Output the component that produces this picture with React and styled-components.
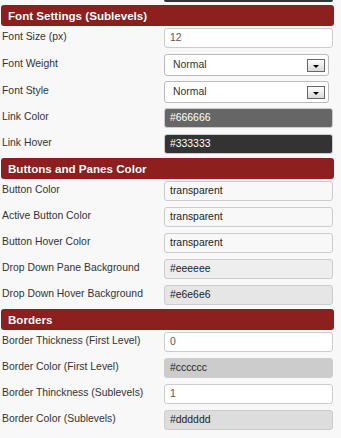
import React from "react";
import styled, { createGlobalStyle } from "styled-components";

const GlobalStyle = createGlobalStyle`
  body {
    margin: 0;
    background: #f8f8f8;
    font-family: "Liberation Sans", Arial, sans-serif;
  }
`;

const sections = [
  {
    title: "Font Settings (Sublevels)",
    rows: [
      { label: "Font Size (px)", value: "12" },
      { label: "Font Weight", value: "Normal", select: true },
      { label: "Font Style", value: "Normal", select: true },
      { label: "Link Color", value: "#666666", bg: "#666666", color: "#ffffff" },
      { label: "Link Hover", value: "#333333", bg: "#333333", color: "#ffffff" },
    ],
  },
  {
    title: "Buttons and Panes Color",
    rows: [
      { label: "Button Color", value: "transparent", bg: "transparent", color: "#222" },
      { label: "Active Button Color", value: "transparent", bg: "transparent", color: "#222" },
      { label: "Button Hover Color", value: "transparent", bg: "transparent", color: "#222" },
      { label: "Drop Down Pane Background", value: "#eeeeee", bg: "#eeeeee", color: "#222" },
      { label: "Drop Down Hover Background", value: "#e6e6e6", bg: "#e6e6e6", color: "#222" },
    ],
  },
  {
    title: "Borders",
    rows: [
      { label: "Border Thickness (First Level)", value: "0" },
      { label: "Border Color (First Level)", value: "#cccccc", bg: "#cccccc", color: "#222" },
      { label: "Border Thinckness (Sublevels)", value: "1" },
      { label: "Border Color (Sublevels)", value: "#dddddd", bg: "#dddddd", color: "#222" },
    ],
  },
];

function App() {
  return (
    <Panel>
      <GlobalStyle />
      <CutInput />
      {sections.map((section) => (
        <Section key={section.title}>
          <Header>{section.title}</Header>
          {section.rows.map((row) => (
            <Row key={row.label} $select={row.select}>
              <Label>{row.label}</Label>
              {row.select ? (
                <Select>
                  <span>{row.value}</span>
                  <ArrowBox>
                    <Arrow />
                  </ArrowBox>
                </Select>
              ) : (
                <Field $bg={row.bg} $color={row.color}>
                  {row.value}
                </Field>
              )}
            </Row>
          ))}
        </Section>
      ))}
    </Panel>
  );
}

export default App;

const Panel = styled.div`
  width: 333px;
  padding-left: 1px;
  overflow: hidden;
`;

// bottom edge of the last field from the section above (scrolled out)
const CutInput = styled.div`
  height: 2px;
  width: 169px;
  margin-left: 163px;
  margin-bottom: 3px;
  background: #333333;
  border-radius: 0 0 3px 3px;
`;

const Section = styled.div`
  display: flex;
  flex-direction: column;
`;

const Header = styled.div`
  height: 21px;
  line-height: 21px;
  padding-left: 7px;
  background: #8e1f1f;
  border-radius: 3px;
  color: #ffffff;
  font-size: 11.6px;
  font-weight: bold;
  text-shadow: 0 0 1px rgba(0, 0, 0, 0.3);
`;

const Row = styled.div`
  display: grid;
  grid-template-columns: 163px 169px;
  align-items: center;
  padding: 2px 0 ${(p) => (p.$select ? "3px" : "4px")};
`;

const Label = styled.div`
  padding-left: 1px;
  padding-bottom: 3px;
  font-size: 10.4px;
  color: #333333;
  white-space: nowrap;
`;

const Field = styled.div`
  box-sizing: border-box;
  height: 20px;
  line-height: 18px;
  padding: 0 5px;
  border: 1px solid #cccccc;
  border-radius: 3px;
  background: ${(p) => p.$bg || "#ffffff"};
  color: ${(p) => p.$color || "#555555"};
  font-size: 10.4px;
`;

const Select = styled.div`
  box-sizing: border-box;
  width: 165px;
  height: 22px;
  padding: 0 3px 0 8px;
  border: 1px solid #bbbbbb;
  border-radius: 3px;
  background: #ffffff;
  display: flex;
  align-items: center;
  justify-content: space-between;
  color: #333333;
  font-size: 10.4px;
  line-height: 20px;
`;

const ArrowBox = styled.div`
  box-sizing: border-box;
  width: 18px;
  height: 13px;
  border: 1px solid #666666;
  background: linear-gradient(#ffffff, #d8d8d8);
  display: flex;
  align-items: flex-end;
  justify-content: center;
  padding-bottom: 3px;
`;

const Arrow = styled.div`
  width: 0;
  height: 0;
  border-left: 3px solid transparent;
  border-right: 3px solid transparent;
  border-top: 3px solid #000000;
`;
